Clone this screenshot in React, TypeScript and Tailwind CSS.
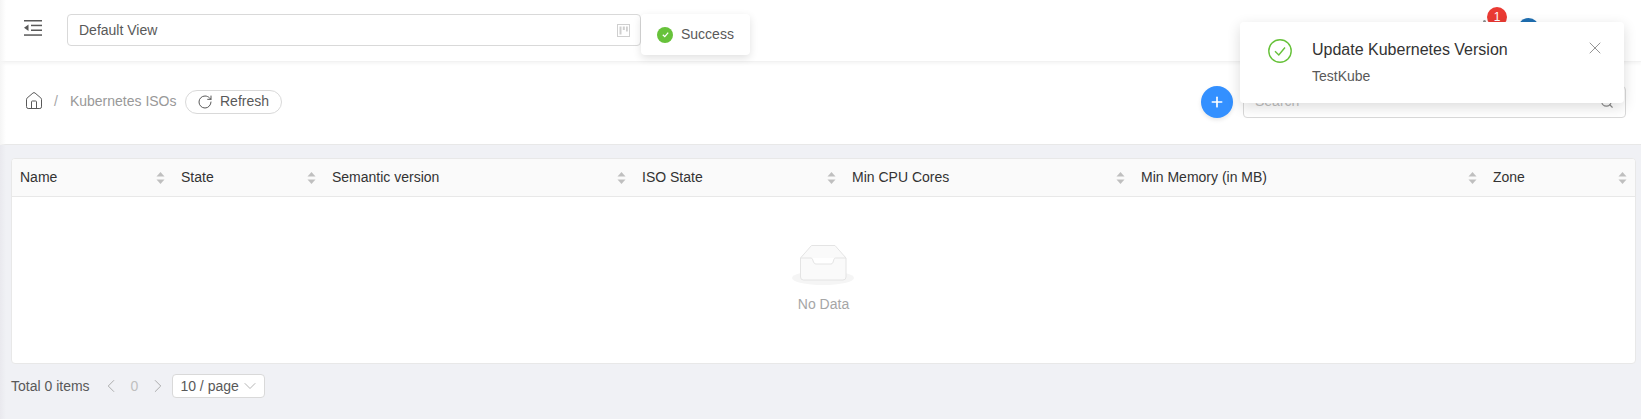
import React from 'react'
import { ChevronDown, ChevronLeft, ChevronRight, Home, Plus, RotateCw, Search, X } from 'lucide-react'

const COLUMNS = [
  { label: 'Name', width: 'w-[161px]' },
  { label: 'State', width: 'w-[151px]' },
  { label: 'Semantic version', width: 'w-[310px]' },
  { label: 'ISO State', width: 'w-[210px]' },
  { label: 'Min CPU Cores', width: 'w-[289px]' },
  { label: 'Min Memory (in MB)', width: 'w-[352px]' },
  { label: 'Zone', width: 'flex-1' },
]

function SortIcon() {
  return (
    <svg width="9" height="14" viewBox="0 0 9 14" className="shrink-0">
      <path d="M4.5 1 L8.5 5.5 L0.5 5.5 Z" fill="#bfbfbf" />
      <path d="M4.5 13 L8.5 8.5 L0.5 8.5 Z" fill="#bfbfbf" />
    </svg>
  )
}

function MenuIcon() {
  return (
    <svg width="18" height="16" viewBox="0 0 18 16" fill="#595959">
      <rect x="0" y="0" width="18" height="1.5" />
      <rect x="7" y="4.7" width="11" height="1.5" />
      <rect x="7" y="9.5" width="11" height="1.5" />
      <rect x="0" y="14.3" width="18" height="1.5" />
      <path d="M0 7.8 L4.5 4.6 L4.5 11 Z" />
    </svg>
  )
}

function BoardIcon() {
  return (
    <svg width="13" height="13" viewBox="0 0 13 13" fill="none">
      <rect x="0.5" y="0.5" width="12" height="12" stroke="#cfcfcf" />
      <rect x="2.5" y="2.5" width="2" height="8" fill="#cfcfcf" />
      <rect x="5.8" y="2.5" width="2" height="3.5" fill="#cfcfcf" />
      <rect x="9" y="2.5" width="1.8" height="5" fill="#cfcfcf" />
    </svg>
  )
}

function EmptyIcon() {
  return (
    <svg width="64" height="41" viewBox="0 0 64 41" fill="none">
      <ellipse cx="31" cy="33" rx="31" ry="7" fill="#f5f5f5" />
      <path
        d="M19.5 0.5 H43 L54 13 V32 a3 3 0 0 1 -3 3 H11.5 a3 3 0 0 1 -3 -3 V13 Z"
        fill="#fafafa"
        stroke="#e4e4e4"
        strokeWidth="1"
      />
      <path
        d="M8.5 13 H19 C21.5 13 20.5 19 24 19 H39 C42 19 41 13 43.5 13 H54"
        fill="#fff"
        stroke="#e4e4e4"
        strokeWidth="1"
      />
    </svg>
  )
}

export default function App() {
  return (
    <div
      className="relative h-[419px] w-[1641px] overflow-hidden bg-[#f0f1f5] text-[14px] text-[#595959]"
      style={{ fontFamily: '"Liberation Sans", Arial, sans-serif' }}
    >
      {/* top bar */}
      <header className="relative flex h-[62px] items-center border-b border-[#f2f2f2] bg-white pl-[24px] shadow-[0_2px_3px_rgba(0,0,0,0.04)]">
        <div className="-mt-[5px] flex w-[43px] shrink-0">
          <MenuIcon />
        </div>
        <div className="-mt-[1px] flex h-[32px] w-[574px] items-center justify-between rounded border border-[#d9d9d9] bg-white pl-[11px] pr-[10px]">
          <span>Default View</span>
          <BoardIcon />
        </div>
        <div className="relative ml-auto mr-[100px] h-full w-[60px]">
          <span className="absolute left-[2px] top-[20px] h-[3px] w-[3px] rounded-full bg-[#8c8c8c]" />
          <span className="absolute left-[6px] top-[7px] flex h-[20px] w-[20px] items-center justify-center rounded-full bg-[#ea3a33] text-[12px] leading-none text-white">
            1
          </span>
          <span className="absolute left-[37px] top-[18px] h-[21px] w-[21px] rounded-full bg-[#1f6fb2]" />
        </div>
      </header>

      {/* breadcrumb row */}
      <div className="flex h-[83px] items-center border-b border-[#e8e8e8] bg-white pb-[3px] pl-[24px] pr-[15px]">
        <Home size={20} strokeWidth={1.2} className="-mt-[1px] text-[#595959]" />
        <span className="ml-[10px] text-[#a6a6a6]">/</span>
        <span className="ml-[12px] text-[#999]">Kubernetes ISOs</span>
        <button
          type="button"
          className="ml-[8px] flex h-[24px] w-[97px] items-center justify-center gap-[7px] rounded-full border border-[#d9d9d9] bg-white text-[#595959]"
        >
          <RotateCw size={16} strokeWidth={1.5} />
          Refresh
        </button>
        <button
          type="button"
          className="ml-auto flex h-[32px] w-[32px] items-center justify-center rounded-full bg-[#3390ff] text-white shadow-[0_2px_4px_rgba(0,0,0,0.1)]"
        >
          <Plus size={16} strokeWidth={2.5} />
        </button>
        <div className="ml-[10px] flex h-[32px] w-[383px] items-center justify-between rounded border border-[#d9d9d9] bg-white pl-[11px] pr-[11px]">
          <span className="text-[#bfbfbf]">Search</span>
          <Search size={14} className="text-[#8c8c8c]" />
        </div>
      </div>

      {/* table */}
      <main className="pl-[11px] pr-[5px] pt-[13px]">
        <div className="overflow-hidden rounded border border-[#e8e8e8] bg-white">
          <div className="flex h-[38px] border-b border-[#e8e8e8] bg-[#fafafa] text-[#333]">
            {COLUMNS.map((col) => (
              <div key={col.label} className={`flex items-center justify-between pl-[8px] pr-[8px] ${col.width}`}>
                <span>{col.label}</span>
                <SortIcon />
              </div>
            ))}
          </div>
          <div className="flex h-[166px] flex-col items-center pt-[48px]">
            <EmptyIcon />
            <span className="mt-[8px] text-[#a6a6a6]">No Data</span>
          </div>
        </div>

        {/* pagination */}
        <div className="mt-[10px] flex items-center">
          <span>Total 0 items</span>
          <ChevronLeft size={22} strokeWidth={1} className="ml-[10px] text-[#a6a6a6]" />
          <span className="ml-[9px] text-[#bfbfbf]">0</span>
          <ChevronRight size={22} strokeWidth={1} className="ml-[9px] text-[#a6a6a6]" />
          <div className="ml-[3px] flex h-[24px] w-[93px] items-center justify-between rounded border border-[#d9d9d9] bg-white pl-[7px] pr-[4px]">
            <span>10 / page</span>
            <ChevronDown size={20} strokeWidth={1} className="text-[#a6a6a6]" />
          </div>
        </div>
      </main>

      {/* sidebar edge */}
      <div className="absolute left-0 top-0 h-[145px] w-[6px] bg-gradient-to-r from-[#f5f5f5] to-transparent" />
      <div className="absolute left-0 top-[145px] h-[274px] w-[6px] bg-gradient-to-r from-[#e9e9ee] to-transparent" />

      {/* message toast */}
      <div className="absolute left-[641px] top-[14px] flex h-[41px] w-[109px] items-center gap-[8px] rounded bg-white pl-[16px] shadow-[0_3px_8px_rgba(0,0,0,0.12)]">
        <span className="flex h-[16px] w-[16px] shrink-0 items-center justify-center rounded-full bg-[#67c23a]">
          <svg width="9" height="9" viewBox="0 0 10 10" fill="none" stroke="#fff" strokeWidth="1.4">
            <path d="M2 5.2 L4.2 7.4 L8 3" />
          </svg>
        </span>
        <span>Success</span>
      </div>

      {/* notification */}
      <div className="absolute left-[1240px] top-[22px] flex h-[81px] w-[384px] rounded bg-white pl-[28px] pr-[19px] pt-[17px] shadow-[0_4px_14px_rgba(0,0,0,0.14)]">
        <svg width="24" height="24" viewBox="0 0 24 24" fill="none" stroke="#67c23a" strokeWidth="1.4" className="shrink-0">
          <circle cx="12" cy="12" r="11.2" />
          <path d="M7 12.3 L10.8 16 L17 8.5" />
        </svg>
        <div className="ml-[20px] flex-1">
          <div className="text-[16px] leading-[22px] text-[#333]">Update Kubernetes Version</div>
          <div className="mt-[5px] leading-[20px] text-[#595959]">TestKube</div>
        </div>
        <X size={20} strokeWidth={1} className="-mt-[1px] text-[#7f7f7f]" />
      </div>
    </div>
  )
}
